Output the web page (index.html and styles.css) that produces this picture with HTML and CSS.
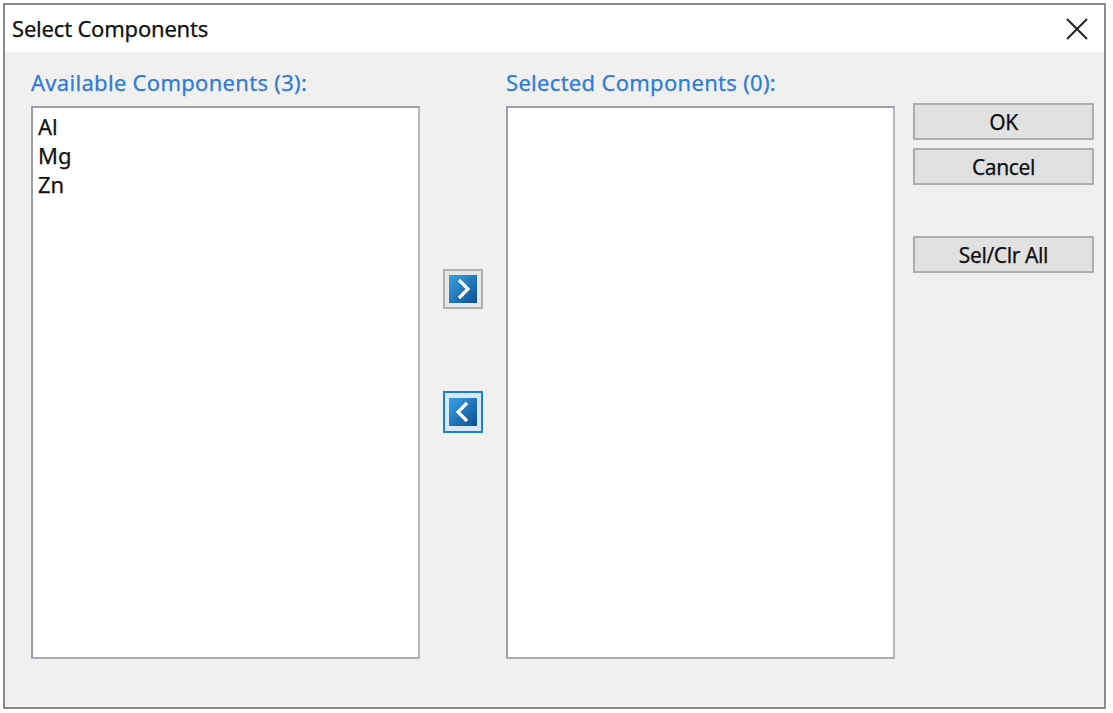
FILE: index.html
```html
<!DOCTYPE html>
<html>
<head>
<meta charset="utf-8">
<link rel="stylesheet" href="styles.css">
</head>
<body>
<div class="dialog">
  <div class="titlebar">
    <span class="title">Select Components</span>
    <svg class="close" width="22" height="22" viewBox="0 0 22 22"><path d="M1 1L21 21M21 1L1 21" stroke="#222" stroke-width="2" fill="none"/></svg>
  </div>
  <div class="content">
    <div class="col">
      <div class="label">Available Components (3):</div>
      <div class="listbox">
        <div class="item">Al</div>
        <div class="item">Mg</div>
        <div class="item">Zn</div>
      </div>
    </div>
    <div class="arrows">
      <div class="abtn">
        <svg width="28" height="28" viewBox="0 0 28 28"><defs><linearGradient id="g1" x1="0" y1="0" x2="1" y2="1"><stop offset="0" stop-color="#3aa2e6"/><stop offset="1" stop-color="#0a4f92"/></linearGradient></defs><rect width="28" height="28" fill="url(#g1)"/><path d="M10 5L19 14L10 23" stroke="#fff" stroke-width="3.2" fill="none" stroke-linejoin="miter"/></svg>
      </div>
      <div class="abtn focus">
        <svg width="28" height="28" viewBox="0 0 28 28"><defs><linearGradient id="g2" x1="0" y1="0" x2="1" y2="1"><stop offset="0" stop-color="#3aa2e6"/><stop offset="1" stop-color="#0a4f92"/></linearGradient></defs><rect width="28" height="28" fill="url(#g2)"/><path d="M18 5L9 14L18 23" stroke="#fff" stroke-width="3.2" fill="none" stroke-linejoin="miter"/></svg>
      </div>
    </div>
    <div class="col">
      <div class="label">Selected Components (0):</div>
      <div class="listbox"></div>
    </div>
    <div class="buttons">
      <div class="btn">OK</div>
      <div class="btn">Cancel</div>
      <div class="btn spaced">Sel/Clr All</div>
    </div>
  </div>
</div>
</body>
</html>
```

FILE: styles.css
```css
html, body {
  margin: 0;
  padding: 0;
  background: #ffffff;
  width: 1113px;
  height: 713px;
  overflow: hidden;
}
body {
  font-family: "Noto Sans", "Liberation Sans", sans-serif;
  -webkit-text-stroke: 0.25px currentColor;
}
.dialog {
  margin: 3px 0 0 3px;
  width: 1099px;
  height: 702px;
  border: 2px solid #8a8a8a;
  display: flex;
  flex-direction: column;
  background: #f0f0f0;
}
.titlebar {
  height: 47px;
  background: #ffffff;
  display: flex;
  align-items: center;
  justify-content: space-between;
  padding: 0 16px 0 7px;
  flex: none;
}
.title {
  font-size: 22px;
  color: #111;
  letter-spacing: -0.2px;
  margin-top: -2px;
}
.content {
  display: flex;
  padding: 14px 0 0 26px;
  flex: 1;
}
.col {
  display: flex;
  flex-direction: column;
  width: 389px;
}
.label {
  font-size: 22px;
  color: #2f7bd6;
  height: 40px;
  line-height: 32px;
  letter-spacing: 0.3px;
}
.listbox {
  height: 553px;
  background: #fff;
  border: 2px solid #9a9ea6;
  border-right-color: #b4b7bc;
  border-bottom-color: #a9acb2;
  box-sizing: border-box;
  padding: 4px 5px;
}
.item {
  font-size: 22px;
  line-height: 29px;
  color: #111;
}
.arrows {
  width: 86px;
  display: flex;
  flex-direction: column;
  align-items: center;
  padding-top: 203px;
  gap: 82px;
}
.abtn {
  width: 40px;
  height: 40px;
  box-sizing: border-box;
  border: 2px solid #b0b0b0;
  background: #e8e8e8;
  display: flex;
  align-items: center;
  justify-content: center;
}
.abtn.focus {
  border-color: #1c7fd6;
  background: #d8e8f6;
  height: 42px;
}
.abtn svg {
  display: block;
}
.buttons {
  margin-left: 18px;
  width: 181px;
  display: flex;
  flex-direction: column;
  gap: 8px;
  padding-top: 37px;
}
.btn {
  height: 37px;
  box-sizing: border-box;
  border: 2px solid #adadad;
  background: #e1e1e1;
  font-size: 21px;
  color: #111;
  display: flex;
  align-items: center;
  justify-content: center;
  letter-spacing: -0.4px;
}
.btn.spaced {
  margin-top: 43px;
}
```
